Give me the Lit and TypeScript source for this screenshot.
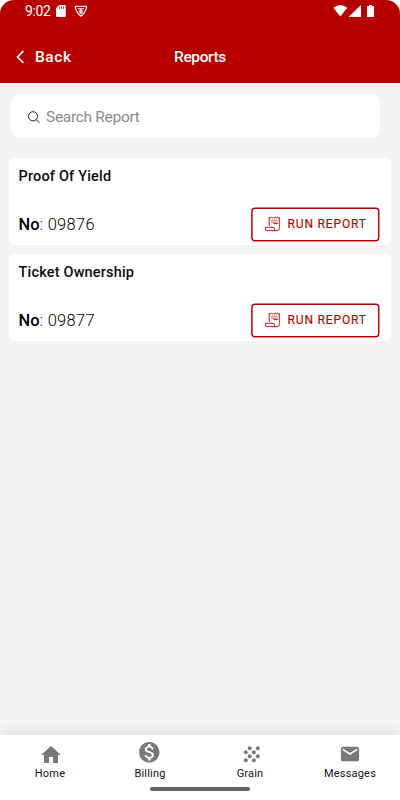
import { LitElement, html, css, svg } from "lit";
import { customElement, property } from "lit/decorators.js";

@customElement("status-bar")
class StatusBar extends LitElement {
  static styles = css`
    :host { display: flex; height: 22px; box-sizing: border-box; align-items: center; padding: 0 26px 0 25px; color: #fff; }
    .time { font-size: 14px; line-height: 22px; letter-spacing: -0.4px; width: 25px; white-space: nowrap; }
    .left, .right { display: block; flex: none; }
    .left { margin-left: 5px; }
    .right { margin-left: auto; }
  `;
  render() {
    return html`
      <span class="time">9:02</span>
      <svg class="left" width="34" height="22" viewBox="55 0 34 22">
        <path fill="#fff" d="M59.3 5h5.4q1 0 1 1v10q0 1-1 1H57q-1 0-1-1V8.3z" />
        <path stroke="#b90000" stroke-width="0.9" d="M59.4 6.5v2.3M61.5 6.5v2.3M63.6 6.5v2.3" />
        <path fill="none" stroke="#fff" stroke-width="1.2" stroke-linejoin="round" d="M76 6.3h9.800q1 .2.7 1.400-1.300 5.200-5.600 8.500-4.300-3.300-5.600-8.500-.3-1.200.7-1.400z" />
        <path fill="none" stroke="#fff" stroke-width="1.1" d="M77.800 8.800h6.200M78.800 10.700h4.200M80.900 8.700v4.500M79.300 11.800l1.600 1.600 1.600-1.600" />
      </svg>
      <svg class="right" width="44" height="22" viewBox="330 0 44 22">
        <path fill="#fff" d="M333.300 7.700Q340.300 2.300 347.300 7.700L340.300 16.600z" />
        <path fill="#fff" d="M361 5v12h-12.500z" />
        <path fill="#fff" d="M369 6V5h3v1h1.500q.6 0 .6.6v10q0 .4-.6.400h-6q-.5 0-.5-.4v-10q0-.6.500-.6z" />
      </svg>
    `;
  }
}

@customElement("report-card")
class ReportCard extends LitElement {
  @property() name = "";
  @property() number = "";
  static styles = css`
    :host { display: flex; flex-direction: column; height: 87px; box-sizing: border-box; background: #fff; border-radius: 5px; padding: 9px 12px 4px 9.500px; }
    .title { font-size: 14.500px; line-height: 20px; font-weight: 500; letter-spacing: 0.18px; color: #0c0c0c; }
    .row { display: flex; justify-content: space-between; align-items: center; margin-top: auto; height: 34px; }
    .number { font-size: 16.500px; font-weight: 300; color: #000; letter-spacing: 0.3px; padding-top: 1px; }
    .number b { font-weight: 500; letter-spacing: 0; }
    button { position: relative; display: flex; align-items: center; width: 128px; height: 34px; box-sizing: border-box; margin: 0; padding: 0 0 0 12.500px; border: 0; background: none; color: #b80000; font: 400 12px/16px Roboto, sans-serif; letter-spacing: 0.85px; white-space: nowrap; -webkit-text-stroke: 0.15px #b80000; }
    .frame { position: absolute; inset: 0; margin: 0; overflow: visible; }
    .scroll { flex: none; margin-right: 7px; }
  `;
  render() {
    return html`
      <div class="title">${this.name}</div>
      <div class="row">
        <span class="number"><b>No</b>: ${this.number}</span>
        <button>
          <svg class="frame" width="128" height="34"><rect x="0.9" y="1.2" width="126.800" height="32.600" rx="3" fill="none" stroke="#b80000" stroke-width="1.500" /></svg>
          <svg class="scroll" width="17" height="16" viewBox="0 0 17 16" fill="none" stroke="#b80000" stroke-width="0.9" stroke-linejoin="round">
            <path d="M5.300 10V1.300l1 .7 1-.7 1 .7 1-.7 1 .7 1-.7 1 .7 1-.7 1 .7 1-.7v11.300q0 2-2 2H3.200Q1.300 14.600 1.300 13v-1.700h8.900v1.500q0 1.800 2 1.800" />
            <path d="M7 4.300h6.500M7 6.200h6.500" stroke-width="0.6" /><path d="M9.500 7.400h4.300" />
          </svg>
          RUN REPORT
        </button>
      </div>
    `;
  }
}

const tabs = [
  { label: "Home", kind: "", icon: svg`<path d="M10 20v-6h4v6h5v-8h3L12 3 2 12h3v8z" />` },
  {
    label: "Billing",
    kind: "raised",
    icon: svg`<path d="M12 2C6.480 2 2 6.480 2 12s4.480 10 10 10 10-4.480 10-10S17.520 2 12 2zm1.410 16.090V20h-2.670v-1.930c-1.710-.36-3.160-1.460-3.270-3.400h1.960c.1 1.050.82 1.870 2.650 1.870 1.960 0 2.400-.98 2.400-1.590 0-.83-.44-1.610-2.670-2.140-2.480-.6-4.180-1.620-4.180-3.670 0-1.720 1.390-2.840 3.110-3.210V4h2.670v1.950c1.860.45 2.790 1.860 2.850 3.390H14.300c-.05-1.110-.64-1.870-2.220-1.870-1.500 0-2.400.68-2.400 1.640 0 .84.65 1.390 2.670 1.910s4.180 1.390 4.180 3.910c-.01 1.830-1.380 2.830-3.120 3.160z" />`,
  },
  {
    label: "Grain",
    kind: "",
    icon: svg`${[[10, 4], [18, 4], [6, 8], [14, 8], [10, 12], [18, 12], [6, 16], [14, 16]].map(
      ([x, y]) => svg`<circle cx=${x + 0.8} cy=${y + 1.200} r="2" />`
    )}`,
  },
  { label: "Messages", kind: "small", icon: svg`<path d="M20 4H4c-1.100 0-1.990.9-1.990 2L2 18c0 1.100.9 2 2 2h16c1.100 0 2-.9 2-2V6c0-1.100-.9-2-2-2zm0 4l-8 5-8-5V6l8 5 8-5v2z" />` },
];

@customElement("tab-bar")
class TabBar extends LitElement {
  static styles = css`
    :host { display: flex; flex-direction: column; align-items: center; height: 65px; background: #fff; box-shadow: 0 -2px 12px rgba(0, 0, 0, 0.09); }
    nav { display: grid; grid-template-columns: repeat(4, 1fr); width: 100%; height: 52px; }
    .tab { display: flex; flex-direction: column; align-items: center; padding-top: 9px; font-size: 11px; line-height: 14px; color: #111; letter-spacing: 0.2px; }
    .icon { display: block; fill: #787878; margin: 0 0 0.500px 1.500px; width: 22px; height: 22px; }
    .raised { margin: -3px 1.500px 3px 0; width: 22.500px; height: 22.500px; }
    .small { margin: -0.500px 0 3px; width: 20px; height: 20px; }
    .handle { width: 100px; height: 3.500px; border-radius: 2px; background: #666; }
  `;
  render() {
    return html`
      <nav>
        ${tabs.map(
          (t) => html`<div class="tab">
            <svg class="icon ${t.kind}" viewBox="1 1 22 22">${t.icon}</svg>
            <span>${t.label}</span>
          </div>`
        )}
      </nav>
      <div class="handle"></div>
    `;
  }
}

@customElement("app-root")
class AppRoot extends LitElement {
  static styles = css`
    :host { display: flex; flex-direction: column; width: 400px; height: 800px; overflow: hidden; background: #fff; font-family: Roboto, sans-serif; }
    .screen { display: flex; flex-direction: column; flex: 1; background: #f3f5f4; border-radius: 14px 14px 0 0; overflow: hidden; }
    header { background: #b90000; height: 83px; flex: none; color: #fff; }
    .bar { display: grid; grid-template-columns: 1fr auto 1fr; align-items: center; height: 24px; margin-top: 23px; padding: 0 15px; font-weight: 500; }
    .back { display: flex; align-items: center; font-size: 15.500px; letter-spacing: 0.55px; }
    .back svg { margin-right: 9px; }
    .heading { font-size: 15.500px; letter-spacing: -0.4px; }
    .search { display: flex; align-items: center; height: 44px; flex: none; margin: 11.400px 20.500px 0 11px; padding: 1px 0 0 16px; box-sizing: border-box; background: #fff; border-radius: 8px; box-shadow: 0 0 1px #e8ebdf; font-size: 15.500px; font-weight: 400; letter-spacing: -0.3px; color: #8b8b8b; }
    .search svg { margin-right: 5px; }
    main { display: flex; flex-direction: column; gap: 9px; padding: 20px 9px 0; flex: 1; }
  `;
  render() {
    return html`
      <div class="screen">
        <header>
          <status-bar></status-bar>
          <div class="bar">
            <div class="back">
              <svg width="11" height="14" viewBox="0 0 11 14"><path d="M8.300 1.200 2.500 7 8.300 12.800" fill="none" stroke="#fff" stroke-width="1.700" /></svg>
              Back
            </div>
            <div class="heading">Reports</div>
          </div>
        </header>
        <div class="search">
          <svg width="14" height="14" viewBox="0 0 14 14" fill="none" stroke="#222" stroke-width="1"><circle cx="6" cy="6.300" r="4.600" /><path d="m9.300 9.600 3.200 3.200" /></svg>
          Search Report
        </div>
        <main>
          <report-card name="Proof Of Yield" number="09876"></report-card>
          <report-card name="Ticket Ownership" number="09877"></report-card>
        </main>
        <tab-bar></tab-bar>
      </div>
    `;
  }
}
